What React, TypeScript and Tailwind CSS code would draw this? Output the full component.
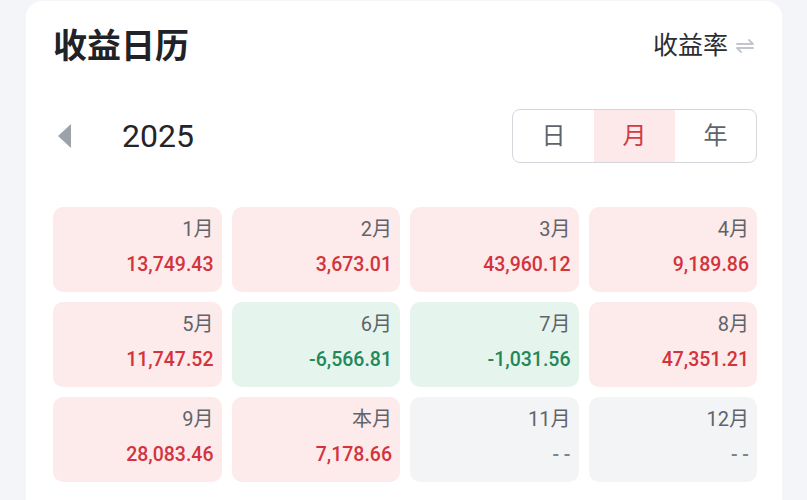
import React from 'react';

type Cell = { label: string; value: string; kind: 'up' | 'down' | 'none' };

const cells: Cell[] = [
  { label: '1月', value: '13,749.43', kind: 'up' },
  { label: '2月', value: '3,673.01', kind: 'up' },
  { label: '3月', value: '43,960.12', kind: 'up' },
  { label: '4月', value: '9,189.86', kind: 'up' },
  { label: '5月', value: '11,747.52', kind: 'up' },
  { label: '6月', value: '-6,566.81', kind: 'down' },
  { label: '7月', value: '-1,031.56', kind: 'down' },
  { label: '8月', value: '47,351.21', kind: 'up' },
  { label: '9月', value: '28,083.46', kind: 'up' },
  { label: '本月', value: '7,178.66', kind: 'up' },
  { label: '11月', value: '- -', kind: 'none' },
  { label: '12月', value: '- -', kind: 'none' },
];

const bgFor = (k: Cell['kind']) =>
  k === 'up' ? 'bg-[#fdeaeb]' : k === 'down' ? 'bg-[#e6f4ee]' : 'bg-[#f3f4f6]';

const textFor = (k: Cell['kind']) =>
  k === 'up' ? 'text-[#d2343d]' : k === 'down' ? 'text-[#22885a]' : 'text-[#7d8288]';

const SwapIcon = () => (
  <svg width="20" height="16" viewBox="0 0 20 16" fill="none" stroke="#c2c6cb" strokeWidth="1.8" strokeLinecap="round" strokeLinejoin="round">
    <path d="M2 6h16l-4-4" />
    <path d="M18 10H2l4 4" />
  </svg>
);

export default function App() {
  return (
    <div
      className="min-h-screen bg-[#f4f5f9] pl-[26px] pr-[25px] pt-[1px]"
      style={{ fontFamily: 'Roboto, "Noto Sans CJK SC", sans-serif' }}
    >
      <div className="bg-white rounded-[16px] pl-[27px] pr-[25px] pt-[21px] pb-[40px]">
        {/* header */}
        <div className="flex items-center justify-between h-[48px]">
          <h1 className="text-[34px] font-bold text-[#1f2226]">收益日历</h1>
          <div className="flex items-center gap-[7px] pr-[2px]">
            <span className="text-[25px] text-[#2a2d31]">收益率</span>
            <SwapIcon />
          </div>
        </div>

        {/* year row */}
        <div className="mt-[39px] flex items-center justify-between h-[54px]">
          <div className="flex items-center">
            <div className="ml-[5px] w-0 h-0 border-y-[12px] border-y-transparent border-r-[13px] border-r-[#9ba2a9]" />
            <span className="ml-[51px] text-[32px] text-[#222529]">2025</span>
          </div>
          <div className="flex h-[54px] w-[245px] rounded-[8px] border-[1.5px] border-[#d3d7db] overflow-hidden">
            <div className="flex-1 flex items-center justify-center text-[24px] text-[#5d646c]">日</div>
            <div className="flex-1 flex items-center justify-center text-[24px] text-[#d23b43] bg-[#fde9ea]">月</div>
            <div className="flex-1 flex items-center justify-center text-[24px] text-[#5d646c]">年</div>
          </div>
        </div>

        {/* month grid */}
        <div className="mt-[44px] grid grid-cols-4 gap-[10px]">
          {cells.map((c) => (
            <div
              key={c.label}
              className={`h-[85px] rounded-[10px] flex flex-col items-end pr-[8px] pt-[10px] gap-[12px] ${bgFor(c.kind)}`}
            >
              <span className="text-[20px] leading-[24px] text-[#5f646a]">{c.label}</span>
              <span className={`text-[19.5px] leading-[24px] font-medium ${textFor(c.kind)}`}>{c.value}</span>
            </div>
          ))}
        </div>
      </div>
    </div>
  );
}
